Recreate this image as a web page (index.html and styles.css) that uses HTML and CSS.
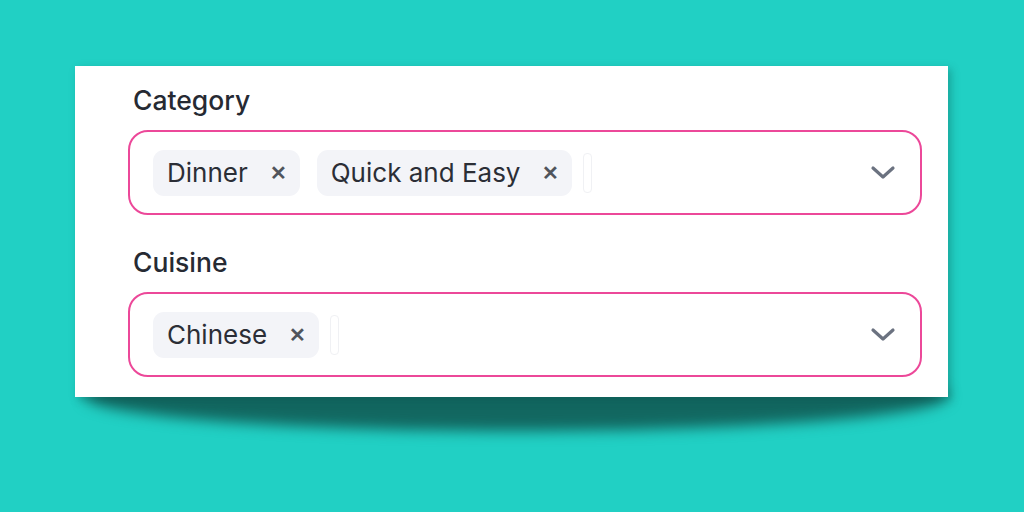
FILE: index.html
```html
<!DOCTYPE html>
<html>
<head>
<meta charset="utf-8">
<link rel="stylesheet" href="styles.css">
</head>
<body>
<div class="stage">
  <div class="card">
    <div class="field">
      <div class="label">Category</div>
      <div class="select">
        <div class="chips">
          <span class="chip">Dinner<span class="x">&#x2715;</span></span>
          <span class="chip">Quick and Easy<span class="x">&#x2715;</span></span>
          <span class="caret"></span>
        </div>
        <svg class="chev" width="26" height="16" viewBox="0 0 26 16"><path d="M3 3 L13 12 L23 3" fill="none" stroke="#6b7280" stroke-width="3.2" stroke-linecap="round" stroke-linejoin="round"/></svg>
      </div>
    </div>
    <div class="field">
      <div class="label">Cuisine</div>
      <div class="select">
        <div class="chips">
          <span class="chip">Chinese<span class="x">&#x2715;</span></span>
          <span class="caret"></span>
        </div>
        <svg class="chev" width="26" height="16" viewBox="0 0 26 16"><path d="M3 3 L13 12 L23 3" fill="none" stroke="#6b7280" stroke-width="3.2" stroke-linecap="round" stroke-linejoin="round"/></svg>
      </div>
    </div>
  </div>
</div>
</body>
</html>
```

FILE: styles.css
```css
html, body {
  margin: 0;
  padding: 0;
}
body {
  background: #21d0c4;
  width: 1024px;
  height: 512px;
  overflow: hidden;
  font-family: Inter, "Noto Sans", sans-serif;
}
.stage {
  padding: 66px 0 0 75px;
}
.card {
  position: relative;
  width: 873px;
  height: 331px;
  box-sizing: border-box;
  background: #ffffff;
  padding: 18px 26px 0 53px;
  display: flex;
  flex-direction: column;
  gap: 31px;
  box-shadow: 3px 3px 8px rgba(10, 80, 75, 0.35);
}
.card::before {
  content: "";
  position: absolute;
  left: 10px;
  right: 0px;
  bottom: -34px;
  height: 70px;
  border-radius: 50%;
  background: #126760;
  filter: blur(7px);
  z-index: -1;
}
.field {
  display: flex;
  flex-direction: column;
  gap: 14px;
}
.label {
  padding-left: 5px;
  font-size: 26.5px;
  font-weight: 500;
  color: #262a33;
  line-height: 32px;
}
.select {
  height: 85px;
  box-sizing: border-box;
  border: 2.5px solid #ec4899;
  border-radius: 20px;
  display: flex;
  align-items: center;
  justify-content: space-between;
  padding: 0 24px 0 23px;
}
.chips {
  display: flex;
  align-items: center;
  gap: 17px;
}
.chip {
  display: flex;
  align-items: center;
  height: 46px;
  background: #f3f4f8;
  border-radius: 11px;
  padding: 0 13px 0 14px;
  font-size: 26px;
  color: #2b2e36;
}
.x {
  margin-left: 22px;
  font-size: 20px;
  font-weight: 700;
  color: #50545c;
}
.caret {
  width: 9px;
  height: 40px;
  border: 1px solid #f0f1f4;
  border-radius: 4px;
  margin-left: -6px;
  box-sizing: border-box;
}
.chev {
  display: block;
}
```
